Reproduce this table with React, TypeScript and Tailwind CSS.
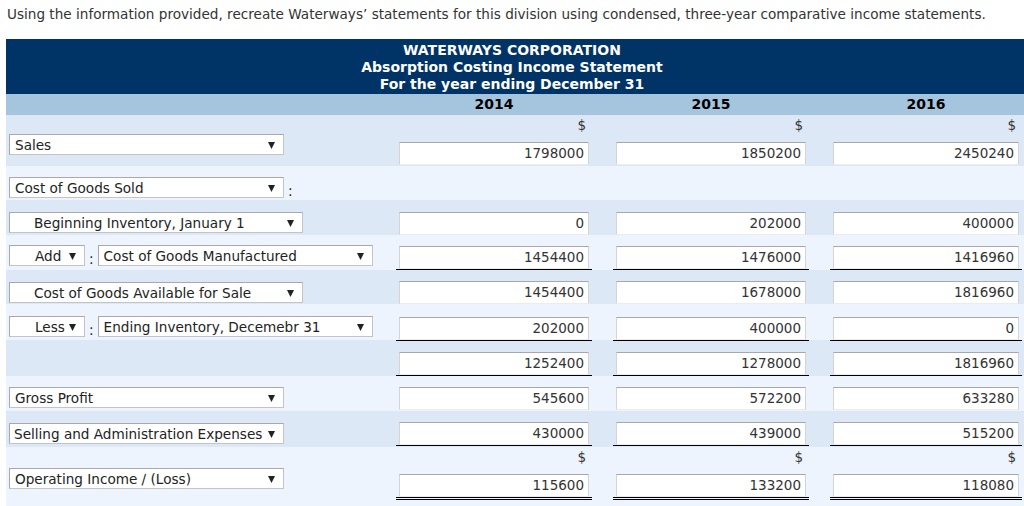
import React from "react";

type Line = "none" | "single" | "double";

type Row = {
  bg: string;
  h: string;
  lp: string;
  rp: string;
  left: React.ReactNode;
  values?: string[];
  line?: Line;
  dollar?: boolean;
};

function Arrow() {
  return (
    <svg width="7" height="7" viewBox="0 0 7 7" className="shrink-0">
      <path d="M0 0 L7 0 L3.5 7 Z" fill="#222" />
    </svg>
  );
}

function Select({
  label,
  w,
  pl = "pl-[5px]",
}: {
  label: string;
  w: string;
  pl?: string;
}) {
  return (
    <div
      className={`${w} ${pl} h-[21px] bg-white border border-[#c4c4c4] border-t-[#a9a9a9] border-l-[#a9a9a9] flex items-center justify-between pr-[8px] pt-[1px] text-[13.6px] text-[#222] whitespace-nowrap`}
    >
      <span>{label}</span>
      <Arrow />
    </div>
  );
}

function Colon() {
  return <span className="self-end text-[13.6px] leading-[14px] mx-[4px] text-[#222]">:</span>;
}

function Amount({
  value,
  line,
  dollar,
  w,
}: {
  value: string;
  line: Line;
  dollar?: boolean;
  w: string;
}) {
  const under =
    line === "single"
      ? "border-b border-black"
      : line === "double"
        ? "border-b-[3px] border-double border-black"
        : "";
  return (
    <div className={`${w} flex flex-col`}>
      {dollar && (
        <div className="h-[26px] leading-[18px] text-right pr-[6px] text-[13.5px] text-[#333]">
          $
        </div>
      )}
      <div className={`px-[3px] ${under}`}>
        <div className="h-[23px] bg-white border border-[#d4d4d4] border-t-[#a8a8a8] border-b-[#ececec] text-right pr-[4px] leading-[21px] text-[13.5px] text-[#333]">
          {value}
        </div>
      </div>
    </div>
  );
}

const DARK = "bg-[#dde8f7]";
const LIGHT = "bg-[#eef4fd]";

const rows: Row[] = [
  {
    bg: DARK,
    h: "h-[51px]",
    lp: "pt-[19px]",
    rp: "pt-[1px]",
    left: <Select label="Sales" w="w-[275px]" />,
    values: ["1798000", "1850200", "2450240"],
    dollar: true,
  },
  {
    bg: LIGHT,
    h: "h-[34px]",
    lp: "pt-[11px]",
    rp: "pt-[11px]",
    left: (
      <div className="flex">
        <Select label="Cost of Goods Sold" w="w-[275px]" />
        <Colon />
      </div>
    ),
  },
  {
    bg: DARK,
    h: "h-[35px]",
    lp: "pt-[12px]",
    rp: "pt-[12px]",
    left: <Select label="Beginning Inventory, January 1" w="w-[294px]" pl="pl-[24px]" />,
    values: ["0", "202000", "400000"],
  },
  {
    bg: LIGHT,
    h: "h-[35px]",
    lp: "pt-[10px]",
    rp: "pt-[11px]",
    left: (
      <div className="flex">
        <Select label="Add" w="w-[76px]" pl="pl-[25px]" />
        <Colon />
        <Select label="Cost of Goods Manufactured" w="w-[275px]" />
      </div>
    ),
    values: ["1454400", "1476000", "1416960"],
    line: "single",
  },
  {
    bg: DARK,
    h: "h-[34px]",
    lp: "pt-[12px]",
    rp: "pt-[11px]",
    left: <Select label="Cost of Goods Available for Sale" w="w-[294px]" pl="pl-[24px]" />,
    values: ["1454400", "1678000", "1816960"],
  },
  {
    bg: LIGHT,
    h: "h-[36px]",
    lp: "pt-[12px]",
    rp: "pt-[13px]",
    left: (
      <div className="flex">
        <Select label="Less" w="w-[76px]" pl="pl-[25px]" />
        <Colon />
        <Select label="Ending Inventory, Decemebr 31" w="w-[275px]" />
      </div>
    ),
    values: ["202000", "400000", "0"],
    line: "single",
  },
  {
    bg: DARK,
    h: "h-[36px]",
    lp: "pt-[12px]",
    rp: "pt-[12px]",
    left: null,
    values: ["1252400", "1278000", "1816960"],
    line: "single",
  },
  {
    bg: LIGHT,
    h: "h-[35px]",
    lp: "pt-[11px]",
    rp: "pt-[11px]",
    left: <Select label="Gross Profit" w="w-[275px]" />,
    values: ["545600", "572200", "633280"],
  },
  {
    bg: DARK,
    h: "h-[36px]",
    lp: "pt-[12px]",
    rp: "pt-[11px]",
    left: <Select label="Selling and Administration Expenses" w="w-[275px]" pl="pl-[4px]" />,
    values: ["430000", "439000", "515200"],
    line: "single",
  },
  {
    bg: LIGHT,
    h: "h-[62px]",
    lp: "pt-[21px]",
    rp: "pt-[1px]",
    left: <Select label="Operating Income / (Loss)" w="w-[275px]" />,
    values: ["115600", "133200", "118080"],
    line: "double",
    dollar: true,
  },
];

export default function App() {
  return (
    <div className="w-[1024px] h-[506px] overflow-hidden bg-white font-['DejaVu_Sans',Verdana,sans-serif]">
      <p className="px-[7px] pt-[6px] leading-[16px] text-[13.6px] text-[#333] whitespace-nowrap">
        Using the information provided, recreate Waterways’ statements for this division using condensed, three-year comparative income statements.
      </p>

      <div className="mt-[17px] ml-[6px] w-[1018px]">
        {/* encabezado */}
        <div className="bg-[#003366] h-[55px] pt-[3px] text-center text-white font-bold text-[14px] leading-[17px] pr-[6px]">
          <div>WATERWAYS CORPORATION</div>
          <div>Absorption Costing Income Statement</div>
          <div>For the year ending December 31</div>
        </div>

        <div className="bg-[#a5c5de] h-[21px] flex font-bold text-[14px] leading-[21px] text-black">
          <div className="w-[390px]" />
          <div className="w-[217px]">
            <div className="w-[196px] text-center">2014</div>
          </div>
          <div className="w-[217px]">
            <div className="w-[196px] text-center">2015</div>
          </div>
          <div className="flex-1">
            <div className="w-[192px] text-center">2016</div>
          </div>
        </div>

        {rows.map((r, i) => (
          <div key={i} className={`${r.bg} ${r.h} flex`}>
            <div className={`w-[390px] pl-[3px] ${r.lp}`}>{r.left}</div>
            {r.values && (
              <>
                <div className={`w-[217px] ${r.rp}`}>
                  <Amount value={r.values[0]} line={r.line ?? "none"} dollar={r.dollar} w="w-[196px]" />
                </div>
                <div className={`w-[217px] ${r.rp}`}>
                  <Amount value={r.values[1]} line={r.line ?? "none"} dollar={r.dollar} w="w-[196px]" />
                </div>
                <div className={`flex-1 ${r.rp}`}>
                  <Amount value={r.values[2]} line={r.line ?? "none"} dollar={r.dollar} w="w-[192px]" />
                </div>
              </>
            )}
          </div>
        ))}
      </div>
    </div>
  );
}
